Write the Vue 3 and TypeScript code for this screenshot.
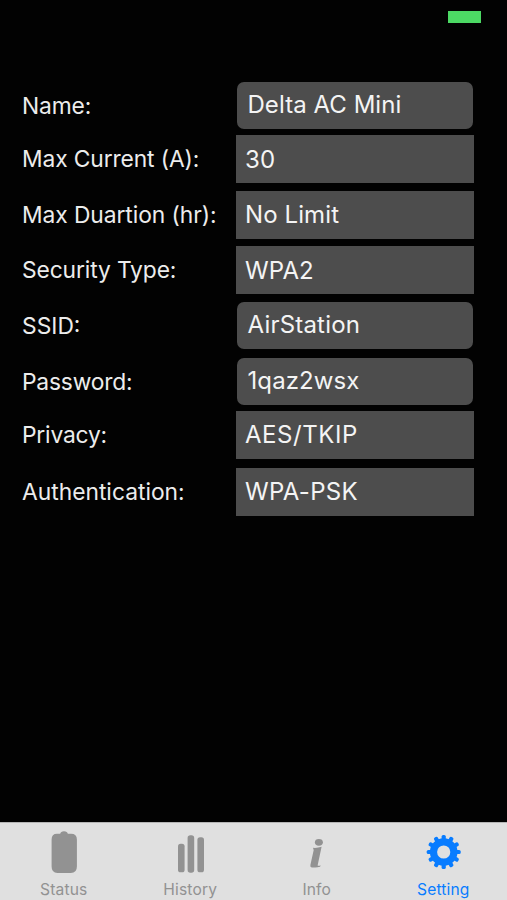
<script setup lang="ts">
interface Field {
  id: string
  label: string
  value: string
  kind: 'text' | 'picker'
}

const fields: Field[] = [
  { id: 'name', label: 'Name:', value: 'Delta AC Mini', kind: 'text' },
  { id: 'current', label: 'Max Current (A):', value: '30', kind: 'picker' },
  { id: 'duration', label: 'Max Duartion (hr):', value: 'No Limit', kind: 'picker' },
  { id: 'security', label: 'Security Type:', value: 'WPA2', kind: 'picker' },
  { id: 'ssid', label: 'SSID:', value: 'AirStation', kind: 'text' },
  { id: 'password', label: 'Password:', value: '1qaz2wsx', kind: 'text' },
  { id: 'privacy', label: 'Privacy:', value: 'AES/TKIP', kind: 'picker' },
  { id: 'auth', label: 'Authentication:', value: 'WPA-PSK', kind: 'picker' },
]

const teeth: number[] = Array.from({ length: 12 }, (_, i) => i * 30)
</script>

<template>
  <div class="screen">
    <header class="status-bar"><span class="battery"></span></header>

    <main class="form">
      <div v-for="f in fields" :key="f.id" class="row" :class="[f.kind, f.id]">
        <span class="label"><span>{{ f.label }}</span></span>
        <span class="value"><span>{{ f.value }}</span></span>
      </div>
    </main>

    <nav class="tabs">
      <div class="tab status">
        <svg width="40" height="48" viewBox="0 0 40 48">
          <path d="M16.2 10.8Q16.6 8.3 20 8.3T23.8 10.8H27Q32.9 10.8 32.9 16.5V43.5Q32.9 50 26.8 50H13.5Q7.6 50 7.6 43.5V16.5Q7.6 10.8 13 10.8Z" />
        </svg>
        <span>Status</span>
      </div>
      <div class="tab history">
        <svg width="40" height="48" viewBox="0 0 40 48">
          <rect x="8" y="20.7" width="6.6" height="28.6" rx="2.6" />
          <rect x="17.6" y="12.3" width="6.6" height="37.5" rx="2.8" />
          <rect x="27.4" y="14.3" width="6.6" height="35" rx="2.6" />
        </svg>
        <span>History</span>
      </div>
      <div class="tab info">
        <svg width="40" height="48" viewBox="0 0 40 48">
          <ellipse cx="21.9" cy="19.3" rx="4" ry="3.4" />
          <path d="M16.1 24.8Q20.3 25.2 24.6 23.8L20.6 42.5Q21.9 43.3 23.6 42.2L23.1 43.7Q20.1 44.7 17.1 44.5H14.8Q12.8 44.2 13.4 42L16.7 26.9Q16.2 26.2 16.1 24.8Z" />
        </svg>
        <span>Info</span>
      </div>
      <div class="tab setting">
        <svg width="40" height="48" viewBox="0 0 40 48">
          <g transform="translate(20.7 29)">
            <rect v-for="a in teeth" :key="a" x="-2.1" y="-17" width="4.2" height="7" rx="1.6" :transform="`rotate(${a})`" />
            <circle r="10.2" fill="none" stroke="currentColor" stroke-width="7.2" />
          </g>
        </svg>
        <span>Setting</span>
      </div>
    </nav>
  </div>
</template>

<style>
body {
  background: #000;
}
</style>

<style scoped>
.screen {
  display: flex;
  flex-direction: column;
  width: 507px;
  height: 900px;
  overflow: hidden;
  background: #020202;
  font-family: Inter, "Liberation Sans", sans-serif;
}

.status-bar {
  display: flex;
  justify-content: flex-end;
  box-sizing: border-box;
  height: 82px;
  padding: 11px 26px 0 0;
}

.battery {
  width: 33px;
  height: 12px;
  background: #4cd964;
}

.form {
  flex: 1;
}

.row {
  display: grid;
  grid-template-columns: 214px 238px;
  height: 48px;
  margin-bottom: 8px;
  padding-left: 22px;
}

.row.text {
  grid-template-columns: 215px 236px;
  height: 47px;
}

.row.name {
  margin-bottom: 6px;
}

.row.current,
.row.duration {
  margin-bottom: 7.6px;
}

.row.ssid {
  margin-bottom: 8.4px;
}

.row.password {
  margin-bottom: 6.4px;
}

.row.privacy {
  margin-bottom: 8.8px;
}

.label,
.value {
  display: flex;
  align-items: center;
  white-space: nowrap;
}

.label {
  color: #ececec;
  font-size: 22.8px;
  letter-spacing: -0.12px;
}

.security .label,
.current .label {
  padding-bottom: 1px;
}

.duration .label {
  letter-spacing: -0.07px;
}

.password .label,
.privacy .label {
  letter-spacing: -0.2px;
}

.ssid .label,
.auth .label {
  letter-spacing: 0;
}

.value {
  box-sizing: border-box;
  padding-left: 9px;
  background: #4d4d4d;
  color: #f4f4f4;
  font-size: 24px;
  letter-spacing: 0.1px;
}

.text .value {
  padding: 0 0 2px 10.5px;
  border-radius: 7px;
}

.password .value {
  padding-bottom: 1px;
}

.name .value {
  letter-spacing: 0.05px;
}

.ssid .value {
  letter-spacing: 0.2px;
}

.privacy .value {
  letter-spacing: 0.55px;
}

.auth .value {
  letter-spacing: 0.3px;
}

.tabs {
  display: grid;
  grid-template-columns: repeat(4, 126.5px);
  box-sizing: border-box;
  width: 507px;
  height: 78px;
  padding-left: 0.5px;
  border-top: 1px solid #b5b5b5;
  background: #e0e0e0;
}

.tab {
  display: flex;
  flex-direction: column;
  align-items: center;
  color: #929292;
  font-size: 15.6px;
  line-height: 20px;
}

.tab svg {
  flex: none;
  overflow: visible;
  fill: currentColor;
}

.tab span {
  margin-top: 9px;
  letter-spacing: 0.15px;
}

.tab.setting {
  color: #087cff;
}
</style>
